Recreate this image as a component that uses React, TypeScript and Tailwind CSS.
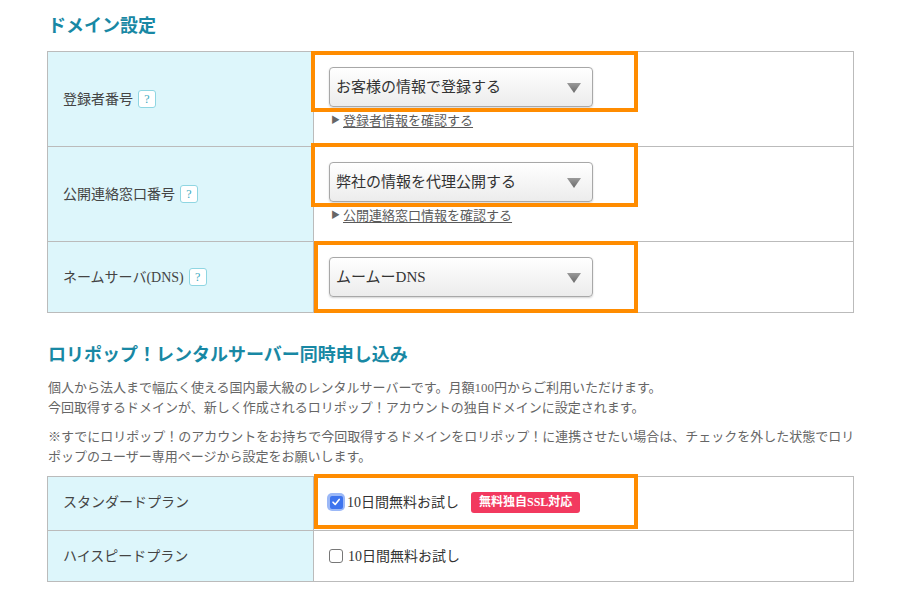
import React from "react";

const FONT = { fontFamily: '"Liberation Serif", "Noto Sans CJK JP", serif' };

function Help() {
  return (
    <span className="ml-[5px] box-border inline-flex h-[18px] w-[18px] shrink-0 items-center justify-center rounded-[3px] border border-[#8fd6e2] bg-white text-[12px] leading-none text-[#38a8bd]">
      ?
    </span>
  );
}

function Select({ label }: { label: string }) {
  return (
    <div className="relative flex h-[40px] w-[264px] items-center rounded-[4px] border border-[#a8a8a8] bg-gradient-to-b from-white to-[#ececec] pl-[6px] text-[15px] text-[#333] shadow-[0_1px_2px_rgba(0,0,0,0.18)]">
      <span>{label}</span>
      <svg className="absolute right-[11px] top-[15px]" width="14" height="10" viewBox="0 0 14 10">
        <defs>
          <linearGradient id="tri" x1="0" y1="0" x2="0" y2="1">
            <stop offset="0" stopColor="#9a9a9a" />
            <stop offset="1" stopColor="#6a6a6a" />
          </linearGradient>
        </defs>
        <polygon points="0,0 14,0 7,10" fill="url(#tri)" />
      </svg>
    </div>
  );
}

function LinkLine({ text }: { text: string }) {
  return (
    <div className="mt-[5px] flex h-[18px] items-center pl-[2px] text-[13px] text-[#5a5a5a]">
      <span className="mr-[3px] text-[9px] text-[#666]">▶</span>
      <span className="underline underline-offset-2">{text}</span>
    </div>
  );
}

function Orange({ cls }: { cls: string }) {
  return <div className={`pointer-events-none absolute border-[4px] border-[#ff8c00] ${cls}`} />;
}

function CheckedBox() {
  return (
    <span className="inline-flex h-[18px] w-[18px] shrink-0 items-center justify-center rounded-[5px] bg-[#9bb8f7]">
      <span className="inline-flex h-[13px] w-[13px] items-center justify-center rounded-[2px] bg-[#3d74ee]">
        <svg width="10" height="10" viewBox="0 0 10 10">
          <path d="M2 5.2 L4.2 7.4 L8.2 2.4" stroke="white" strokeWidth="1.6" fill="none" strokeLinecap="round" strokeLinejoin="round" />
        </svg>
      </span>
    </span>
  );
}

export default function App() {
  return (
    <div className="relative h-[606px] w-[899px] overflow-hidden bg-white" style={FONT}>
      <div className="pl-[47px] pt-[14px]">
        <h2 className="h-[24px] pl-[1px] text-[18px] font-bold leading-[24px] text-[#1888a4]">ドメイン設定</h2>

        <div className="mt-[13px] w-[807px] border border-[#bbbbbb]">
          <div className="flex h-[95px] border-b border-[#bbbbbb]">
            <div className="flex w-[266px] items-center border-r border-[#bbbbbb] bg-[#ddf6fb] pl-[15px] text-[14px] text-[#444]">
              <span>登録者番号</span>
              <Help />
            </div>
            <div className="flex flex-1 flex-col pl-[15px] pt-[15px]">
              <Select label="お客様の情報で登録する" />
              <LinkLine text="登録者情報を確認する" />
            </div>
          </div>
          <div className="flex h-[95px] border-b border-[#bbbbbb]">
            <div className="flex w-[266px] items-center border-r border-[#bbbbbb] bg-[#ddf6fb] pl-[15px] text-[14px] text-[#444]">
              <span>公開連絡窓口番号</span>
              <Help />
            </div>
            <div className="flex flex-1 flex-col pl-[15px] pt-[15px]">
              <Select label="弊社の情報を代理公開する" />
              <LinkLine text="公開連絡窓口情報を確認する" />
            </div>
          </div>
          <div className="flex h-[70px]">
            <div className="flex w-[266px] items-center border-r border-[#bbbbbb] bg-[#ddf6fb] pl-[15px] text-[14px] text-[#444]">
              <span>ネームサーバ(DNS)</span>
              <Help />
            </div>
            <div className="flex flex-1 flex-col pl-[15px] pt-[15px]">
              <Select label="ムームーDNS" />
            </div>
          </div>
        </div>

        <h2 className="mt-[30px] h-[24px] pl-[1px] text-[18px] font-bold leading-[24px] text-[#1888a4]">
          ロリポップ！レンタルサーバー同時申し込み
        </h2>

        <p className="mt-[11px] whitespace-nowrap pl-[1px] text-[13px] leading-[20px] text-[#666]">
          個人から法人まで幅広く使える国内最大級のレンタルサーバーです。月額100円からご利用いただけます。
          <br />
          今回取得するドメインが、新しく作成されるロリポップ！アカウントの独自ドメインに設定されます。
        </p>
        <p className="mt-[9px] whitespace-nowrap pl-[1px] text-[13px] leading-[20px] text-[#666]">
          ※すでにロリポップ！のアカウントをお持ちで今回取得するドメインをロリポップ！に連携させたい場合は、チェックを外した状態でロリ
          <br />
          ポップのユーザー専用ページから設定をお願いします。
        </p>

        <div className="mt-[9px] w-[807px] border border-[#bbbbbb]">
          <div className="flex h-[54px] border-b border-[#bbbbbb]">
            <div className="flex w-[266px] items-center border-r border-[#bbbbbb] bg-[#ddf6fb] pb-[3px] pl-[15px] text-[14px] text-[#444]">
              スタンダードプラン
            </div>
            <div className="flex flex-1 items-center pb-[3px] pl-[13px] text-[14px] text-[#333]">
              <CheckedBox />
              <span className="ml-[2px]">10日間無料お試し</span>
              <span className="ml-[12px] inline-flex h-[21px] items-center rounded-[3px] bg-[#f2395f] px-[8px] text-[12px] font-bold text-white">
                無料独自SSL対応
              </span>
            </div>
          </div>
          <div className="flex h-[50px]">
            <div className="flex w-[266px] items-center border-r border-[#bbbbbb] bg-[#ddf6fb] pl-[15px] text-[14px] text-[#444]">
              ハイスピードプラン
            </div>
            <div className="flex flex-1 items-center pl-[15px] text-[14px] text-[#333]">
              <span className="inline-block h-[14px] w-[14px] shrink-0 rounded-[3px] border border-[#777] bg-white" />
              <span className="ml-[5px]">10日間無料お試し</span>
            </div>
          </div>
        </div>
      </div>

      <Orange cls="left-[311px] top-[51px] h-[61px] w-[327px]" />
      <Orange cls="left-[311px] top-[143px] h-[64px] w-[327px]" />
      <Orange cls="left-[314px] top-[241px] h-[72px] w-[324px]" />
      <Orange cls="left-[314px] top-[474px] h-[55px] w-[324px]" />
    </div>
  );
}
